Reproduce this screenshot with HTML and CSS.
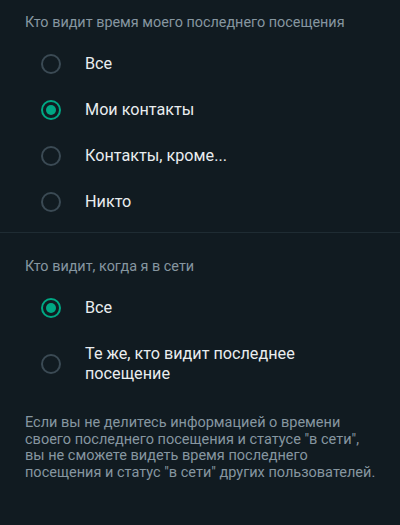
FILE: index.html
```html
<!DOCTYPE html>
<html lang="ru">
<head>
<meta charset="utf-8">
<link rel="stylesheet" href="styles.css">
</head>
<body>
<div class="page">
  <section class="section first">
    <div class="heading">Кто видит время моего последнего посещения</div>
    <div class="options">
      <div class="option"><span class="radio"></span><span class="label">Все</span></div>
      <div class="option"><span class="radio checked"></span><span class="label">Мои контакты</span></div>
      <div class="option"><span class="radio"></span><span class="label">Контакты, кроме...</span></div>
      <div class="option"><span class="radio"></span><span class="label">Никто</span></div>
    </div>
  </section>
  <div class="divider"></div>
  <section class="section second">
    <div class="heading">Кто видит, когда я в сети</div>
    <div class="options">
      <div class="option"><span class="radio checked"></span><span class="label">Все</span></div>
      <div class="option tall"><span class="radio"></span><span class="label">Те же, кто видит последнее<br>посещение</span></div>
    </div>
    <p class="note">Если вы не делитесь информацией о времени<br>своего последнего посещения и статусе "в сети",<br>вы не сможете видеть время последнего<br>посещения и статус "в сети" других пользователей.</p>
  </section>
</div>
</body>
</html>
```
FILE: styles.css
```css
html, body {
  margin: 0;
  padding: 0;
  background: #111b21;
}
body {
  font-family: Roboto, "Noto Sans", sans-serif;
  width: 400px;
  height: 525px;
  overflow: hidden;
}
.page {
  display: flex;
  flex-direction: column;
}
.section.first {
  padding: 12px 0 7px;
}
.section.second {
  padding: 23px 0 0;
}
.heading {
  padding-left: 25px;
  font-size: 14.4px;
  line-height: 21px;
  color: #8696a0;
}
.section.first .options {
  margin-top: 8px;
}
.section.second .options {
  margin-top: 8px;
}
.options {
  display: flex;
  flex-direction: column;
}
.option {
  display: flex;
  align-items: center;
  height: 46px;
  padding-left: 41px;
  gap: 24px;
}
.option.tall {
  height: auto;
  padding-top: 13px;
  padding-bottom: 13px;
}
.radio {
  flex: none;
  box-sizing: border-box;
  width: 20px;
  height: 20px;
  border-radius: 50%;
  border: 2px solid #3b4a54;
  display: flex;
  align-items: center;
  justify-content: center;
}
.radio.checked {
  border-color: #00a884;
}
.radio.checked::after {
  content: "";
  width: 10px;
  height: 10px;
  border-radius: 50%;
  background: #00a884;
}
.label {
  font-size: 16.2px;
  line-height: 20px;
  color: #e9edef;
}
.divider {
  height: 1px;
  background: #1f2c33;
}
.note {
  margin: 18px 0 0;
  padding: 0 10px 0 25px;
  font-size: 14.5px;
  line-height: 16.5px;
  color: #8696a0;
  white-space: nowrap;
}
```
